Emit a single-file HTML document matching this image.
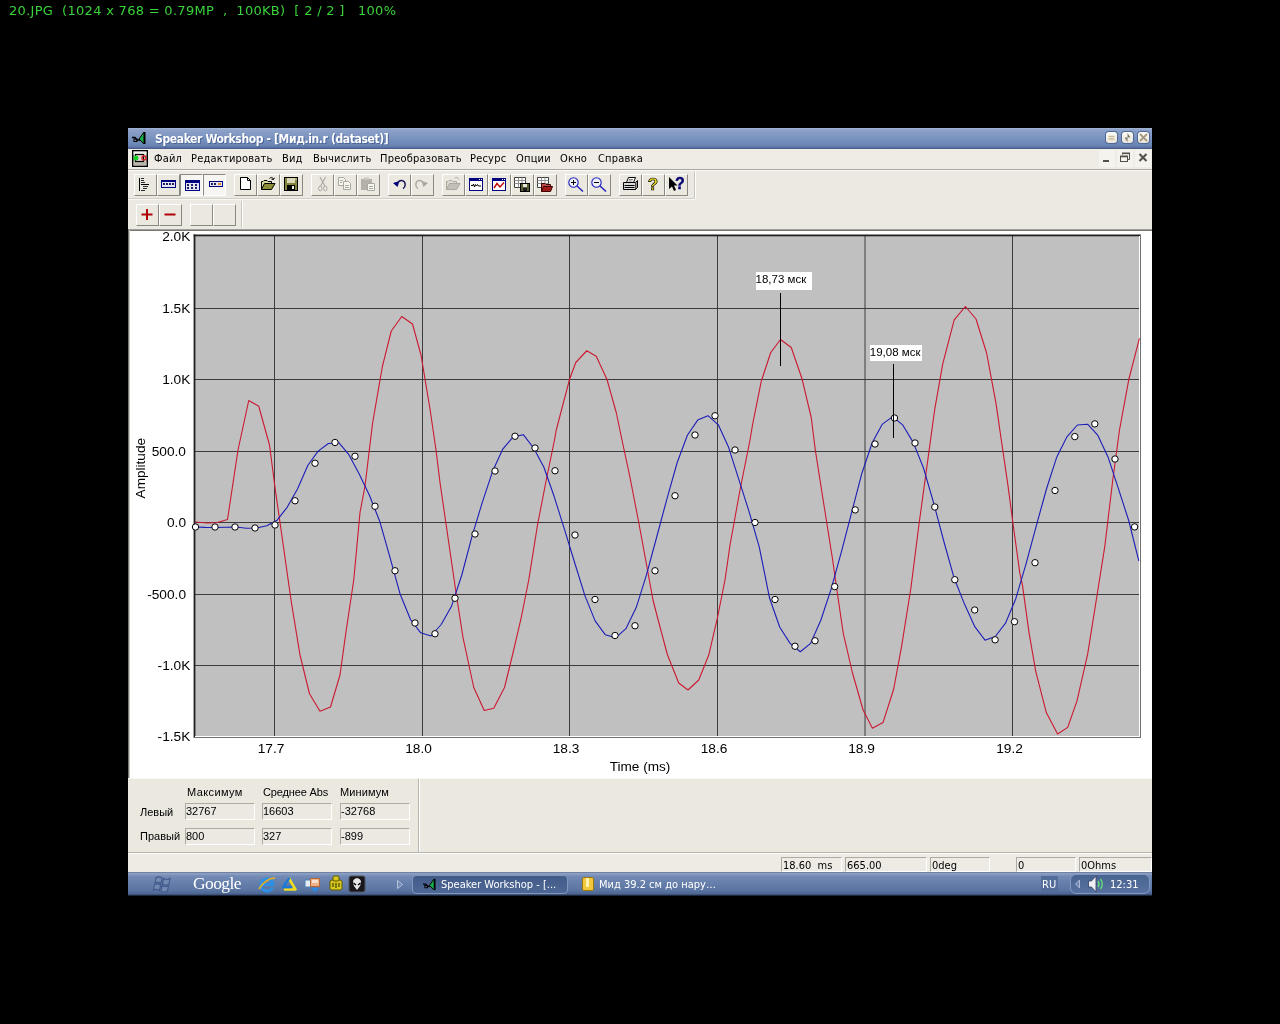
<!DOCTYPE html>
<html lang="ru">
<head>
<meta charset="utf-8">
<title>20.JPG</title>
<style>
html,body{margin:0;padding:0;background:#000;}
body{width:1280px;height:1024px;position:relative;overflow:hidden;font-family:"Liberation Sans",sans-serif;}
.abs{position:absolute;}
#info{will-change:transform;position:absolute;left:9px;top:3px;color:#3ad23a;font-family:"DejaVu Sans","Liberation Sans",sans-serif;font-size:13px;line-height:16px;white-space:pre;letter-spacing:0.3px;word-spacing:0;}
#win{position:absolute;left:128px;top:128px;width:1024px;height:768px;background:#ece9e2;overflow:hidden;will-change:transform;}
#title{position:absolute;left:0;top:0;width:1024px;height:21px;background:linear-gradient(#a5b6d6 0,#8ca1c9 2px,#7c95c0 9px,#6b86b5 17px,#6079aa 19px,#4f6596 20px,#475b8c 21px);}
#title .txt{position:absolute;left:27px;top:3px;color:#fff;font-weight:bold;font-size:12px;line-height:16px;font-family:"DejaVu Sans Condensed","DejaVu Sans","Liberation Sans",sans-serif;letter-spacing:-0.37px;white-space:pre;text-shadow:1px 1px 0 #4a6496;}
.cb{position:absolute;top:4px;width:11px;height:11px;border-radius:3px;background:linear-gradient(#fbfaf6,#e9e5d8);box-shadow:0 0 0 1px #4f6796;}
#menu{position:absolute;left:0;top:21px;width:1024px;height:20px;background:#efece5;}
#menu span{position:absolute;top:2px;font-size:11px;line-height:16px;color:#000;letter-spacing:0.2px;font-family:"DejaVu Sans Condensed","DejaVu Sans","Liberation Sans",sans-serif;white-space:pre;}
.mb{position:absolute;top:1px;width:16px;height:17px;background:#f5f3ee;}
.hl{position:absolute;left:0;width:1024px;height:1px;}
.btn{position:absolute;background:#ebe8e0;border-top:1px solid #fff;border-left:1px solid #fff;border-right:1px solid #8a887f;border-bottom:1px solid #8a887f;}
.btn.dn{background:#f6f5f1;border-top:1px solid #8a887f;border-left:1px solid #8a887f;border-right:1px solid #fff;border-bottom:1px solid #fff;}
.btn svg{position:absolute;left:2px;top:2px;overflow:visible;}
.btn.dn svg{left:3px;top:3px;}
#chart{position:absolute;left:0;top:101px;width:1024px;height:549px;background:#fff;}
#chart svg{position:absolute;left:0;top:0;}
#chart text{font-family:"Liberation Sans",sans-serif;fill:#000;}
.ax{font-size:13.7px;}
.ax2{font-size:13.6px;}
#panel{position:absolute;left:0;top:650px;width:1024px;height:76px;background:#ebe8e0;}
.fld{position:absolute;width:70px;height:17px;border:1px solid #aeaba2;border-right-color:#fff;border-bottom-color:#fff;box-sizing:border-box;font-size:11px;line-height:15px;padding-left:0;color:#000;background:#ece9e2;}
.lbl{position:absolute;font-size:11px;line-height:13px;color:#000;white-space:pre;}
#status{position:absolute;left:0;top:726px;width:1024px;height:18px;background:#eeebe4;}
.sf{position:absolute;top:3px;height:15px;border:1px solid #acaaa1;border-right-color:#fff;border-bottom-color:#fff;box-sizing:border-box;font-size:11px;line-height:15px;padding-left:1px;color:#000;font-family:"DejaVu Sans Condensed","DejaVu Sans","Liberation Sans",sans-serif;white-space:pre;}
#task{position:absolute;left:0;top:744px;width:1024px;height:24px;background:linear-gradient(#566480 0,#8c9ec2 1px,#8c9ec2 2px,#738bb5 4px,#667fab 11px,#5b75a2 18px,#4c6591 22px,#2f3f62 23px,#0a0e18 24px);}
#task .t{position:absolute;top:6px;color:#fff;font-size:11px;line-height:14px;font-family:"DejaVu Sans Condensed","DejaVu Sans","Liberation Sans",sans-serif;white-space:pre;}
#task svg{position:absolute;overflow:visible;}
</style>
</head>
<body>
<div id="info">20.JPG  (1024 x 768 = 0.79MP  ,  100KB)  [ 2 / 2 ]   100%</div>
<div id="win">
  <div id="title">
    <svg class="abs" style="left:3px;top:3px" width="16" height="14" viewBox="0 0 16 14"><path d="M8 8L13 1V13Z" fill="#18b048" stroke="#000" stroke-width="1"/><rect x="13" y="1" width="1.5" height="12" fill="#000"/><path d="M1 6.5H4L6 9H9" stroke="#000" stroke-width="1.3" fill="none"/><rect x="3" y="8" width="3" height="2.5" fill="none" stroke="#000"/></svg>
    <div class="txt">Speaker Workshop - [Мид.in.r (dataset)]</div>
    <div class="cb" style="left:978px"><svg class="abs" style="left:-1px;top:-1px" width="13" height="13"><path d="M3.5 5.5H9.5M3.5 8H9.5" stroke="#c8bc98" stroke-width="1.6"/></svg></div>
    <div class="cb" style="left:994px"><svg class="abs" style="left:-1px;top:-1px" width="13" height="13"><path d="M6.5 2L9.5 6.5H6.5ZM6.5 11L3.5 6.5H6.5Z" fill="#7c7868"/></svg></div>
    <div class="cb" style="left:1010px"><svg class="abs" style="left:-1px;top:-1px" width="13" height="13"><path d="M3 3L10 10M10 3L3 10" stroke="#a09880" stroke-width="1.8"/></svg></div>
  </div>
  <div id="menu">
    <svg class="abs" style="left:4px;top:1px" width="16" height="17" viewBox="0 0 16 17"><rect x="0" y="0" width="16" height="17" fill="#000"/><rect x="1.500" y="1.500" width="13" height="14" fill="#d0cdc4"/><rect x="1.500" y="1.500" width="13" height="3" fill="#f0eee8"/><rect x="1.500" y="12" width="13" height="3.500" fill="#b8b5ac"/><rect x="3.500" y="4.500" width="8" height="7" fill="#e8d0d0" stroke="#000" stroke-width="1.2"/><circle cx="4" cy="8" r="2.500" fill="#18d028"/><circle cx="12" cy="8" r="2" fill="none" stroke="#d02020" stroke-width="1.300"/></svg>
    <span style="left:26px">Файл</span>
    <span style="left:63px">Редактировать</span>
    <span style="left:154px">Вид</span>
    <span style="left:185px">Вычислить</span>
    <span style="left:252px">Преобразовать</span>
    <span style="left:342px">Ресурс</span>
    <span style="left:388px">Опции</span>
    <span style="left:432px">Окно</span>
    <span style="left:470px">Справка</span>
    <div class="mb" style="left:971px"><svg width="16" height="15"><rect x="4" y="10" width="6" height="2" fill="#555047"/></svg></div>
    <div class="mb" style="left:989px"><svg width="16" height="15"><path d="M5.5 4.5V3.5H12.5V9.5H10.5" fill="none" stroke="#555047"/><rect x="5" y="2.5" width="8" height="1.6" fill="#555047"/><rect x="3.5" y="6.5" width="7" height="5" fill="none" stroke="#555047"/><rect x="3" y="5.5" width="8" height="1.8" fill="#555047"/></svg></div>
    <div class="mb" style="left:1007px"><svg width="16" height="15"><path d="M4.5 4L11.5 11M11.5 4L4.5 11" stroke="#555047" stroke-width="2"/></svg></div>
  </div>
  <div class="hl" style="top:41px;background:#aaa79e"></div>
  <div class="hl" style="top:42px;background:#fbfaf7"></div>
  <div id="tb1">
    <div class="abs" style="left:566px;top:43px;width:1px;height:28px;background:#c9c6bc"></div>
    <div class="abs" style="left:567px;top:43px;width:1px;height:28px;background:#fff"></div>
    <div class="abs" style="left:0;top:70px;width:567px;height:1px;background:#d2cfc6"></div>
    <div class="abs" style="left:0;top:71px;width:567px;height:1px;background:#f8f7f3"></div>
    <div class="btn" style="left:6px;top:46px;width:21px;height:20px"><svg viewBox="0 0 16 15" width="16" height="15"><rect x="2" y="1" width="1" height="13" fill="#000"/><rect x="4" y="1" width="3" height="1" fill="#303030"/><rect x="4" y="3" width="3" height="1" fill="#303030"/><rect x="4" y="5" width="4" height="1" fill="#303030"/><rect x="4" y="7" width="8" height="1" fill="#000"/><rect x="6" y="9" width="5" height="1" fill="#303030"/><rect x="6" y="11" width="4" height="1" fill="#303030"/><rect x="4" y="13" width="4" height="1" fill="#303030"/></svg></div>
    <div class="btn" style="left:29px;top:46px;width:21px;height:20px"><svg viewBox="0 0 16 15" width="16" height="15"><rect x="1" y="3" width="15" height="8" fill="#000080"/><rect x="2" y="5" width="13" height="5" fill="#e4e4f4"/><rect x="3" y="6" width="2" height="2" fill="#202060"/><rect x="6" y="6" width="2" height="2" fill="#202060"/><rect x="9" y="6" width="2" height="2" fill="#202060"/><rect x="12" y="6" width="2" height="2" fill="#202060"/></svg></div>
    <div class="btn dn" style="left:52px;top:46px;width:21px;height:20px"><svg viewBox="0 0 16 15" width="16" height="15"><rect x="1" y="2" width="15" height="11" fill="#000080"/><rect x="2" y="5" width="13" height="7" fill="#e4e4f4"/><rect x="3" y="6" width="2" height="2" fill="#202060"/><rect x="3" y="9" width="2" height="2" fill="#202060"/><rect x="7" y="6" width="2" height="2" fill="#202060"/><rect x="7" y="9" width="2" height="2" fill="#202060"/><rect x="11" y="6" width="2" height="2" fill="#202060"/><rect x="11" y="9" width="2" height="2" fill="#202060"/></svg></div>
    <div class="btn dn" style="left:75px;top:46px;width:21px;height:20px"><svg viewBox="0 0 16 15" width="16" height="15"><rect x="2" y="3" width="14" height="6" fill="#000080"/><rect x="3" y="4" width="12" height="4" fill="#e4e4f4"/><rect x="4" y="5" width="2" height="2" fill="#202060"/><rect x="7" y="5" width="2" height="2" fill="#202060"/><rect x="11" y="5" width="3" height="2" fill="#e09020"/></svg></div>
    <div class="btn" style="left:106px;top:46px;width:21px;height:20px"><svg viewBox="0 0 16 15" width="16" height="15"><path d="M3.5 0.5H10.5L13.5 3.5V12.5H3.5Z" stroke="#000" stroke-width="1" fill="#fff"/><path d="M10.5 0.5V3.5H13.5" stroke="#000" stroke-width="1" fill="none"/></svg></div>
    <div class="btn" style="left:129px;top:46px;width:21px;height:20px"><svg viewBox="0 0 16 15" width="16" height="15"><path d="M1.5 12.5V4.5H3L4 3.5H7L8 4.5H11.5V6.5" stroke="#000" stroke-width="1" fill="#d8d898"/><path d="M1.5 12.5L4.5 6.5H15L11.5 12.5Z" stroke="#000" stroke-width="1" fill="#8e8e3a"/><path d="M9.5 1.5C11 0 13 0 13.5 2.5M13.5 2.5L11.5 2.2M13.5 2.5L14.5 0.8" stroke="#000" stroke-width="1" fill="none"/></svg></div>
    <div class="btn" style="left:152px;top:46px;width:21px;height:20px"><svg viewBox="0 0 16 15" width="16" height="15"><rect x="1" y="0" width="14" height="14" fill="#000"/><rect x="2" y="1" width="12" height="12" fill="#84843c"/><rect x="4" y="1" width="8" height="5" fill="#d8d8b8"/><rect x="4" y="8" width="8" height="5" fill="#000"/><rect x="9" y="9" width="2" height="3" fill="#f0f0e0"/><rect x="12.5" y="1.5" width="1" height="1.5" fill="#f0f0e0"/></svg></div>
    <div class="btn" style="left:183px;top:46px;width:21px;height:20px"><svg viewBox="0 0 16 15" width="16" height="15"><path d="M6 0L10.8 9M11.5 0L6.7 9" stroke="#aaa89e" stroke-width="1.1" fill="none"/><ellipse cx="6.3" cy="11.5" rx="1.7" ry="2.4" stroke="#aaa89e" fill="none"/><ellipse cx="11.3" cy="11.500" rx="1.7" ry="2.4" stroke="#aaa89e" fill="none"/></svg></div>
    <div class="btn" style="left:206px;top:46px;width:21px;height:20px"><svg viewBox="0 0 16 15" width="16" height="15"><path d="M1.5 0.5H6.5L8.5 2.5V8.5H1.5Z" stroke="#aaa89e" stroke-width="1" fill="#f6f5f0"/><path d="M6.5 4.5H11.5L13.5 6.5V12.5H6.5Z" stroke="#aaa89e" stroke-width="1" fill="#f6f5f0"/><path d="M8 8.5H12M8 10.500H12M3 3.5H6M3 5.5H5" stroke="#aaa89e" stroke-width="1" fill="none"/></svg></div>
    <div class="btn" style="left:229px;top:46px;width:21px;height:20px"><svg viewBox="0 0 16 15" width="16" height="15"><rect x="1" y="2" width="11" height="11" fill="#b4b2a8"/><rect x="4" y="0.5" width="5" height="2.5" fill="#c8c6bd"/><path d="M7.5 6.5H14.5V13.500H7.5Z" stroke="#aaa89e" stroke-width="1" fill="#f6f5f0"/><path d="M9 9.5H13M9 11.500H13" stroke="#aaa89e" stroke-width="1" fill="none"/></svg></div>
    <div class="btn" style="left:260px;top:46px;width:21px;height:20px"><svg viewBox="0 0 16 15" width="16" height="15"><path d="M7 5.5C9 2.2 14 3 14.2 7.5C14.2 9.500 13.5 10.800 12 11.500" stroke="#101050" stroke-width="1.4" fill="none"/><path d="M2 6L8.500 4L6.500 10Z" fill="#000078"/></svg></div>
    <div class="btn" style="left:283px;top:46px;width:21px;height:20px"><svg viewBox="0 0 16 15" width="16" height="15"><path d="M9 5.5C7 2.2 2 3 1.8 7.5C1.8 9.500 2.5 10.800 4 11.500" stroke="#aaa89e" stroke-width="1.4" fill="none"/><path d="M14 6L7.500 4L9.500 10Z" fill="#aaa89e"/></svg></div>
    <div class="btn" style="left:314px;top:46px;width:21px;height:20px"><svg viewBox="0 0 16 15" width="16" height="15"><path d="M1.5 12.500V4.5H3L4 3.5H7L8 4.5H11.5V6.5" stroke="#aaa89e" stroke-width="1" fill="#dcdad2"/><path d="M1.5 12.500L4.5 6.5H15L11.500 12.500Z" stroke="#aaa89e" stroke-width="1" fill="#c2c0b6"/><path d="M9.5 1.5C11 0 13 0 13.5 2.5" stroke="#aaa89e" stroke-width="1" fill="none"/></svg></div>
    <div class="btn" style="left:337px;top:46px;width:21px;height:20px"><svg viewBox="0 0 16 15" width="16" height="15"><rect x="1" y="1" width="14" height="13" fill="#000080"/><rect x="2" y="4" width="12" height="9" fill="#fff"/><rect x="11" y="2" width="1" height="1" fill="#fff"/><rect x="13" y="2" width="1" height="1" fill="#fff"/><path d="M3 8.5H5L5.5 7L6.5 10L7.5 7.5L8.5 9L9.500 7.5L10.500 9H13" stroke="#000" stroke-width="1" fill="none"/></svg></div>
    <div class="btn" style="left:360px;top:46px;width:21px;height:20px"><svg viewBox="0 0 16 15" width="16" height="15"><rect x="1" y="1" width="14" height="13" fill="#000080"/><rect x="2" y="4" width="12" height="9" fill="#fff"/><rect x="11" y="2" width="1" height="1" fill="#fff"/><rect x="13" y="2" width="1" height="1" fill="#fff"/><path d="M3 11L6 6.5L9 10L13 5.5" stroke="#c00000" stroke-width="1.4" fill="none"/></svg></div>
    <div class="btn" style="left:383px;top:46px;width:21px;height:20px"><svg viewBox="0 0 16 15" width="16" height="15"><path d="M0.5 0.5H11.5V10.500H0.5Z" stroke="#404040" stroke-width="1" fill="#fff"/><path d="M0.5 3.5H11.5M0.5 6.5H11.5M4.5 0.5V10.500M8 0.5V10.500" stroke="#909090" stroke-width="1" fill="none"/><rect x="6" y="6" width="10" height="9" fill="#000"/><rect x="7" y="7" width="8" height="7" fill="#5c5c38"/><rect x="9" y="7" width="4" height="3" fill="#e8e8d8"/><rect x="9" y="11" width="4" height="3" fill="#202020"/></svg></div>
    <div class="btn" style="left:406px;top:46px;width:21px;height:20px"><svg viewBox="0 0 16 15" width="16" height="15"><path d="M0.5 0.5H11.5V10.500H0.5Z" stroke="#404040" stroke-width="1" fill="#fff"/><path d="M0.5 3.5H11.5M0.5 6.5H11.5M4.5 0.5V10.500M8 0.5V10.500" stroke="#909090" stroke-width="1" fill="none"/><path d="M4.5 14.500V6.5H8L9 7.5H13.500V9.500" stroke="#400000" stroke-width="1" fill="#c05050"/><path d="M4.5 14.500L6.5 9.500H15.500L13.500 14.500Z" stroke="#400000" stroke-width="1" fill="#a01818"/></svg></div>
    <div class="btn" style="left:437px;top:46px;width:21px;height:20px"><svg viewBox="0 0 16 15" width="16" height="15"><circle cx="5.5" cy="5.5" r="4.7" stroke="#2020c0" stroke-width="1.1" fill="#f0f0fa"/><path d="M9 9L15 14.500" stroke="#2020c0" stroke-width="1.5" fill="none"/><path d="M3 5.5H8M5.5 3V8" stroke="#000" stroke-width="1" fill="none"/></svg></div>
    <div class="btn" style="left:460px;top:46px;width:21px;height:20px"><svg viewBox="0 0 16 15" width="16" height="15"><circle cx="5.5" cy="5.5" r="4.7" stroke="#2020c0" stroke-width="1.1" fill="#f0f0fa"/><path d="M9 9L15 14.500" stroke="#2020c0" stroke-width="1.5" fill="none"/><path d="M3 5.5H8" stroke="#000" stroke-width="1" fill="none"/></svg></div>
    <div class="btn" style="left:491px;top:46px;width:21px;height:20px"><svg viewBox="0 0 16 15" width="16" height="15"><path d="M4.5 5.5L6.5 0.5H13.500L11.500 5.5" stroke="#000" stroke-width="1" fill="#fff"/><path d="M1.5 5.5H13.500V12.500H1.5Z" stroke="#000" stroke-width="1" fill="#d8d8d8"/><path d="M13.500 5.5L15.500 3.5V10.500L13.500 12.500" stroke="#000" stroke-width="1" fill="#909090"/><path d="M2.5 8.5H12.500M2.5 10.500H12.500" stroke="#000" stroke-width="1" fill="none"/><path d="M7 2.5H11M6.5 4H10.500" stroke="#606060" stroke-width="0.8" fill="none"/></svg></div>
    <div class="btn" style="left:514px;top:46px;width:21px;height:20px"><svg viewBox="0 0 16 15" width="16" height="15"><text x="8" y="12.5" text-anchor="middle" font-family="Liberation Sans,sans-serif" font-weight="bold" font-size="17" fill="#f4e428" stroke="#000" stroke-width="0.7">?</text></svg></div>
    <div class="btn" style="left:537px;top:46px;width:21px;height:20px"><svg viewBox="0 0 16 15" width="16" height="15"><path d="M1 0V12L4 9.500L6 14L8 13L6 8.5H9.500Z" fill="#000"/><text x="11.800" y="11.500" text-anchor="middle" font-family="Liberation Sans,sans-serif" font-weight="bold" font-size="16" fill="#000070" stroke="#000070" stroke-width="0.4">?</text></svg></div>
  </div>
  <div id="tb2">
    <div class="abs" style="left:113px;top:73px;width:1px;height:27px;background:#c9c6bc"></div>
    <div class="abs" style="left:114px;top:73px;width:1px;height:27px;background:#fff"></div>
    <div class="btn" style="left:8px;top:76px;width:21px;height:20px"><svg viewBox="0 0 16 15" width="16" height="15"><path d="M2.5 7.5H13.5M8 2V13" stroke="#b00008" stroke-width="2" fill="none"/></svg></div>
    <div class="btn" style="left:31px;top:76px;width:21px;height:20px"><svg viewBox="0 0 16 15" width="16" height="15"><path d="M2.5 7.5H13.5" stroke="#b00008" stroke-width="2" fill="none"/></svg></div>
    <div class="btn" style="left:62px;top:76px;width:21px;height:20px"></div>
    <div class="btn" style="left:85px;top:76px;width:21px;height:20px"></div>
  </div>
  <div id="chart">
    <div class="abs" style="left:0;top:0;width:1024px;height:1px;background:#a09e96"></div>
    <div class="abs" style="left:0;top:1px;width:1024px;height:1px;background:#787670"></div>
    <div class="abs" style="left:0;top:0;width:1px;height:549px;background:#7a7872"></div>
    <div class="abs" style="left:1px;top:1px;width:1px;height:548px;background:#c8c6c0"></div>
    <svg width="1024" height="549" viewBox="128 229 1024 549">
      <rect x="194" y="235" width="947" height="503" fill="#c0c0c0"/>
      <rect x="274" y="236" width="1" height="500" fill="#3c3c3c"/>
      <rect x="422" y="236" width="1" height="500" fill="#3c3c3c"/>
      <rect x="569" y="236" width="1" height="500" fill="#3c3c3c"/>
      <rect x="717" y="236" width="1" height="500" fill="#3c3c3c"/>
      <rect x="864.5" y="236" width="1" height="500" fill="#3c3c3c"/>
      <rect x="1012" y="236" width="1" height="500" fill="#3c3c3c"/>
      <rect x="195" y="308" width="944" height="1" fill="#3c3c3c"/>
      <rect x="195" y="379" width="944" height="1" fill="#3c3c3c"/>
      <rect x="195" y="451" width="944" height="1" fill="#3c3c3c"/>
      <rect x="195" y="522" width="944" height="1" fill="#3c3c3c"/>
      <rect x="195" y="594" width="944" height="1" fill="#3c3c3c"/>
      <rect x="195" y="665" width="944" height="1" fill="#3c3c3c"/>
      <rect x="193.6" y="234.5" width="947" height="1.8" fill="#202020"/><rect x="193.6" y="234.5" width="1.8" height="503" fill="#202020"/>
      <rect x="1139" y="236" width="1" height="501" fill="#fff"/><rect x="195" y="736" width="945" height="1" fill="#fff"/><rect x="1140" y="234.5" width="1" height="503.5" fill="#707070"/><rect x="193.6" y="737" width="947.4" height="1" fill="#707070"/>
      <polyline points="195,522 207.5,523 217.5,522.5 227.5,519.5 238,450 248.75,400.5 258.75,406.25 269.5,445 275,487.5 282.5,540 291,600 300,655 309.5,693.75 320,711.25 330.5,707 340,675 346.25,630 353.75,580 360,512.5 365,486 372.5,423.75 380,380 382.5,366 391.25,331 401.75,316.5 412.5,324 421,355 430,409 436,450 440,482.5 456,592.5 463,637.5 473.75,687.5 484.25,710.5 493.75,708.25 504.5,687.5 512.5,655 521.25,617.5 528.75,580 537.5,525 546.25,480 554.5,440 556.25,430 569.5,379.5 575.75,362.5 586.75,350.75 596.25,356.25 607,379.5 616.25,412.5 622,440 630,477.5 638.75,522.5 647.5,570 653,600 657.5,617.5 667.5,655 678.75,683 688,690 698.75,680 708.75,655 717.5,617.5 725,580 730,545 740,490 750,440 752.5,425 761.25,381.25 770.75,352.5 780.5,339.5 791.25,347.5 802,378.75 811.25,417.5 815.3,450 823.3,501 832.6,559.5 836.6,588 843.2,633 852.5,673 863.1,710 872.4,728.2 883,722.6 893.7,689 901.6,646.4 910.9,588 918.9,525 926.9,466.6 934.8,408.8 942.8,363.6 954.2,319.8 965.4,306.5 976,319 986.6,353 996,403.4 1001.3,440 1007.9,485.2 1013.2,525 1019.8,572.8 1022.5,585.3 1029.1,633.1 1035.8,671.6 1046.4,712.8 1057.6,734 1067.7,727.4 1077,700.9 1087.6,654.4 1098.2,588 1104.8,546.3 1112.8,479.8 1119.5,430 1128.8,379.5 1139.4,338.4" fill="none" stroke="#cc1830" stroke-width="1.1" stroke-linejoin="round"/>
      <polyline points="195,527 205.3,527.4 215.5,527.5 225.8,527.3 236,527 246.3,528.2 256.6,528 266.8,525.8 277.1,520.2 287.3,507.1 297.6,488.7 307.9,465.3 318.1,451.1 328.4,443.5 338.6,442.4 348.9,454.7 359.2,474.1 369.4,495.3 379.7,521.2 389.9,557.2 400.2,594.3 410.5,619.5 420.7,632.8 431,636 441.2,624.5 451.5,606.3 461.8,575 472,536.3 482.3,502.3 492.5,471.6 502.8,449.1 513.1,436.9 523.3,434.7 533.6,448 543.8,467 554.1,496.3 564.4,529.2 574.6,562.5 584.9,595.6 595.1,620.9 605.4,634.8 615.7,637.8 625.9,628.7 636.2,607.6 646.4,575.2 656.7,537 667,498.6 677.2,462.5 687.5,435 697.7,420.1 708,415.7 718.3,424.8 728.5,447.1 738.8,479.3 749,511.4 759.3,547.1 769.6,598.3 779.8,627.3 790.1,643.4 800.3,651.7 810.6,643.4 820.9,620 831.1,589.2 841.4,551.8 851.6,512.7 861.9,473.2 872.2,442.8 882.4,424.1 892.7,416.6 902.9,425.2 913.2,442.4 923.5,468 933.7,503.2 944,542 954.2,578.3 964.5,604.1 974.8,626.7 985,640.2 995.3,636.5 1005.5,623.2 1015.8,598.7 1026.1,563.6 1036.3,525.8 1046.6,488.5 1056.8,456.9 1067.1,436.6 1077.4,425 1087.6,424.2 1097.9,435.4 1108.1,457.2 1118.4,488.7 1128.7,520.5 1138.8,560.9" fill="none" stroke="#1c1cb8" stroke-width="1.1" stroke-linejoin="round"/>
      <circle cx="195.5" cy="527" r="3.2" fill="#fff" stroke="#000" stroke-width="1"/>
      <circle cx="215" cy="527" r="3.2" fill="#fff" stroke="#000" stroke-width="1"/>
      <circle cx="235" cy="527" r="3.2" fill="#fff" stroke="#000" stroke-width="1"/>
      <circle cx="255" cy="528" r="3.2" fill="#fff" stroke="#000" stroke-width="1"/>
      <circle cx="275" cy="525" r="3.2" fill="#fff" stroke="#000" stroke-width="1"/>
      <circle cx="295" cy="500.75" r="3.2" fill="#fff" stroke="#000" stroke-width="1"/>
      <circle cx="315" cy="463.25" r="3.2" fill="#fff" stroke="#000" stroke-width="1"/>
      <circle cx="335" cy="442.5" r="3.2" fill="#fff" stroke="#000" stroke-width="1"/>
      <circle cx="355" cy="456.25" r="3.2" fill="#fff" stroke="#000" stroke-width="1"/>
      <circle cx="375" cy="506.25" r="3.2" fill="#fff" stroke="#000" stroke-width="1"/>
      <circle cx="395" cy="570.75" r="3.2" fill="#fff" stroke="#000" stroke-width="1"/>
      <circle cx="415" cy="623" r="3.2" fill="#fff" stroke="#000" stroke-width="1"/>
      <circle cx="435" cy="633.75" r="3.2" fill="#fff" stroke="#000" stroke-width="1"/>
      <circle cx="455" cy="598.25" r="3.2" fill="#fff" stroke="#000" stroke-width="1"/>
      <circle cx="475" cy="534" r="3.2" fill="#fff" stroke="#000" stroke-width="1"/>
      <circle cx="495" cy="471" r="3.2" fill="#fff" stroke="#000" stroke-width="1"/>
      <circle cx="515" cy="436.25" r="3.2" fill="#fff" stroke="#000" stroke-width="1"/>
      <circle cx="535" cy="448" r="3.2" fill="#fff" stroke="#000" stroke-width="1"/>
      <circle cx="555" cy="470.75" r="3.2" fill="#fff" stroke="#000" stroke-width="1"/>
      <circle cx="575" cy="535" r="3.2" fill="#fff" stroke="#000" stroke-width="1"/>
      <circle cx="595" cy="599.5" r="3.2" fill="#fff" stroke="#000" stroke-width="1"/>
      <circle cx="615" cy="635.5" r="3.2" fill="#fff" stroke="#000" stroke-width="1"/>
      <circle cx="635" cy="625.75" r="3.2" fill="#fff" stroke="#000" stroke-width="1"/>
      <circle cx="655" cy="570.75" r="3.2" fill="#fff" stroke="#000" stroke-width="1"/>
      <circle cx="675" cy="495.75" r="3.2" fill="#fff" stroke="#000" stroke-width="1"/>
      <circle cx="695" cy="435" r="3.2" fill="#fff" stroke="#000" stroke-width="1"/>
      <circle cx="715" cy="415.75" r="3.2" fill="#fff" stroke="#000" stroke-width="1"/>
      <circle cx="735" cy="450" r="3.2" fill="#fff" stroke="#000" stroke-width="1"/>
      <circle cx="755" cy="522.5" r="3.2" fill="#fff" stroke="#000" stroke-width="1"/>
      <circle cx="775" cy="599.5" r="3.2" fill="#fff" stroke="#000" stroke-width="1"/>
      <circle cx="795" cy="646.25" r="3.2" fill="#fff" stroke="#000" stroke-width="1"/>
      <circle cx="815" cy="640.75" r="3.2" fill="#fff" stroke="#000" stroke-width="1"/>
      <circle cx="834.7" cy="586.6" r="3.2" fill="#fff" stroke="#000" stroke-width="1"/>
      <circle cx="855.2" cy="509.9" r="3.2" fill="#fff" stroke="#000" stroke-width="1"/>
      <circle cx="875" cy="444" r="3.2" fill="#fff" stroke="#000" stroke-width="1"/>
      <circle cx="894.5" cy="418" r="3.2" fill="#fff" stroke="#000" stroke-width="1"/>
      <circle cx="915" cy="443" r="3.2" fill="#fff" stroke="#000" stroke-width="1"/>
      <circle cx="934.8" cy="507" r="3.2" fill="#fff" stroke="#000" stroke-width="1"/>
      <circle cx="954.8" cy="579.7" r="3.2" fill="#fff" stroke="#000" stroke-width="1"/>
      <circle cx="974.7" cy="610" r="3.2" fill="#fff" stroke="#000" stroke-width="1"/>
      <circle cx="995.1" cy="639.8" r="3.2" fill="#fff" stroke="#000" stroke-width="1"/>
      <circle cx="1014.5" cy="621.7" r="3.2" fill="#fff" stroke="#000" stroke-width="1"/>
      <circle cx="1035" cy="562.7" r="3.2" fill="#fff" stroke="#000" stroke-width="1"/>
      <circle cx="1055" cy="490.5" r="3.2" fill="#fff" stroke="#000" stroke-width="1"/>
      <circle cx="1074.8" cy="436.6" r="3.2" fill="#fff" stroke="#000" stroke-width="1"/>
      <circle cx="1094.8" cy="423.9" r="3.2" fill="#fff" stroke="#000" stroke-width="1"/>
      <circle cx="1115" cy="459" r="3.2" fill="#fff" stroke="#000" stroke-width="1"/>
      <circle cx="1134.6" cy="526.9" r="3.2" fill="#fff" stroke="#000" stroke-width="1"/>
      <rect x="780" y="293" width="1" height="73" fill="#000"/><rect x="893" y="364" width="1" height="74" fill="#000"/>
      <rect x="756" y="272" width="56" height="18" fill="#fff"/><rect x="870" y="345" width="52" height="16" fill="#fff"/>
      <text x="755.5" y="283.2" font-size="11.5" class="an">18,73 мск</text><text x="869.8" y="356" font-size="11.5" class="an">19,08 мск</text>
      <text x="190.3" y="241" text-anchor="end" class="ax">2.0K</text>
      <text x="190.3" y="312.7" text-anchor="end" class="ax">1.5K</text>
      <text x="190.3" y="383.7" text-anchor="end" class="ax">1.0K</text>
      <text x="186" y="455.7" text-anchor="end" class="ax">500.0</text>
      <text x="186" y="526.7" text-anchor="end" class="ax">0.0</text>
      <text x="186" y="598.7" text-anchor="end" class="ax">-500.0</text>
      <text x="190.3" y="669.7" text-anchor="end" class="ax">-1.0K</text>
      <text x="190.3" y="741.2" text-anchor="end" class="ax">-1.5K</text>
      <text x="271" y="753" text-anchor="middle" class="ax">17.7</text>
      <text x="418.5" y="753" text-anchor="middle" class="ax">18.0</text>
      <text x="566" y="753" text-anchor="middle" class="ax">18.3</text>
      <text x="714" y="753" text-anchor="middle" class="ax">18.6</text>
      <text x="861.5" y="753" text-anchor="middle" class="ax">18.9</text>
      <text x="1009.5" y="753" text-anchor="middle" class="ax">19.2</text>
      <text x="640" y="770.5" text-anchor="middle" class="ax2">Time (ms)</text>
      <text transform="translate(145.4,468.2) rotate(-90)" text-anchor="middle" class="ax2">Amplitude</text>
    </svg>
  </div>
  <div id="panel">
    <div class="lbl" style="left:59px;top:8px;letter-spacing:0.4px">Максимум</div>
    <div class="lbl" style="left:135px;top:8px;letter-spacing:-0.15px">Среднее Abs</div>
    <div class="lbl" style="left:212px;top:8px;letter-spacing:0.1px">Минимум</div>
    <div class="lbl" style="left:12px;top:28px">Левый</div>
    <div class="lbl" style="left:12px;top:52px">Правый</div>
    <div class="fld" style="left:57px;top:25px">32767</div>
    <div class="fld" style="left:134px;top:25px">16603</div>
    <div class="fld" style="left:212px;top:25px">-32768</div>
    <div class="fld" style="left:57px;top:50px">800</div>
    <div class="fld" style="left:134px;top:50px">327</div>
    <div class="fld" style="left:212px;top:50px">-899</div>
    <div class="abs" style="left:290px;top:0;width:1px;height:75px;background:#b8b5ac"></div><div class="abs" style="left:291px;top:0;width:1px;height:75px;background:#fff"></div>
    <div class="abs" style="left:0;top:74px;width:1024px;height:1px;background:#b8b5ac"></div><div class="abs" style="left:0;top:75px;width:1024px;height:1px;background:#fff"></div>
    <div class="abs" style="left:0;top:0;width:1024px;height:1px;background:#f7f6f2"></div>
  </div>
  <div id="status">
    <div class="sf" style="left:653px;width:61px">18.60  ms</div>
    <div class="sf" style="left:717px;width:82px">665.00</div>
    <div class="sf" style="left:802px;width:60px">0deg</div>
    <div class="sf" style="left:888px;width:60px">0</div>
    <div class="sf" style="left:951px;width:73px">0Ohms</div>
  </div>
  <div id="task">
    <svg style="left:24px;top:4px" width="20" height="17" viewBox="0 0 20 17"><g fill="#7289b2" stroke="#42588a" stroke-width="1.100"><path d="M4 1.500Q7 0 10 2L9 7.500Q6 5.500 3 7Z"/><path d="M11.500 2.500Q14.500 4.500 18 2.500L17 8Q13.500 10 10.500 8Z"/><path d="M2.500 8.500Q5.500 7 8.500 9L7.500 14.500Q4.500 12.500 1.500 14Z"/><path d="M10 9.500Q13 11.500 16.500 9.500L15.500 15Q12 17 9 15Z"/></g></svg>
    <div class="abs" style="left:65px;top:-1.5px;color:#fff;font-family:'Liberation Serif',serif;font-size:17.5px;line-height:24px;letter-spacing:-0.6px;white-space:pre">Google</div>
    <svg style="left:130px;top:3px" width="110" height="18" viewBox="0 0 110 18">
      <path d="M14.500 12.500A6 6 0 1 1 15 9.500H5" fill="none" stroke="#2c90e4" stroke-width="3"/><path d="M1 14Q8 3 17 3" stroke="#e8b020" stroke-width="1.6" fill="none"/>
      <path d="M31 3.500L37.500 14.500H27" fill="none" stroke="#f0dc20" stroke-width="2.600" stroke-linejoin="round" stroke-linecap="round"/><path d="M31 3.500L25 12H33" fill="none" stroke="#1c78d8" stroke-width="2.300" stroke-linejoin="round" stroke-linecap="round"/>
      <rect x="47" y="5" width="7" height="7" fill="#e4ecf4" stroke="#5080b0"/><rect x="52.500" y="3.500" width="9" height="8" fill="#f0b088" stroke="#b06838"/><rect x="54" y="5" width="6" height="3" fill="#f8e0d0"/><path d="M53 13H61L57 17.500Z" fill="#2c88e0"/>
      <rect x="72" y="5" width="12" height="10" rx="2" fill="#d8c820" stroke="#605800"/><rect x="75" y="1" width="6" height="5" rx="1" fill="#d8c820" stroke="#605800"/><path d="M75 8V12M78 8V13M81 8V12" stroke="#404000" stroke-width="1.2"/>
      <rect x="91" y="1" width="16" height="16" rx="2" fill="#18181c" stroke="#50545c"/><path d="M99 3Q105 4 102 11L99 15L96 11Q93 4 99 3Z" fill="#e8e8e8"/><path d="M95.5 8L98 10M102.500 8L100 10" stroke="#000" stroke-width="1.4"/>
    </svg>
    <svg style="left:268px;top:7px" width="8" height="11"><path d="M1.5 1.5L6.5 5.500L1.5 9.500Z" fill="#6f88b4" stroke="#b8c4dc" stroke-width="1"/></svg>
    <div class="abs" style="left:284px;top:3px;width:156px;height:19px;border-radius:4px;background:linear-gradient(#425a88,#4e6896);border:1px solid #8097be;box-sizing:border-box;"></div>
    <svg style="left:294px;top:6px" width="15" height="13" viewBox="0 0 16 14"><path d="M8 8L13 1V13Z" fill="#18b048" stroke="#000" stroke-width="1"/><rect x="13" y="1" width="1.5" height="12" fill="#000"/><path d="M1 6.500H4L6 9H9" stroke="#000" stroke-width="1.3" fill="none"/><rect x="3" y="8" width="3" height="2.5" fill="none" stroke="#000"/></svg>
    <div class="t" style="left:313px">Speaker Workshop - [...</div>
    <svg style="left:454px;top:5px" width="12" height="14"><rect x="0.5" y="0.5" width="11" height="13" rx="1.5" fill="#f0c838" stroke="#a07810"/><rect x="4" y="1" width="3" height="9" fill="#fff2b0"/></svg>
    <div class="t" style="left:471px">Мид 39.2 см до нару…</div>
    <div class="abs" style="left:913px;top:4px;width:17px;height:16px;background:#546c9a"></div>
    <div class="t" style="left:914px">RU</div>
    <div class="abs" style="left:942px;top:2px;width:80px;height:20px;border-radius:6px;background:linear-gradient(#4a6492,#58729f);border:1px solid #8298c0;box-sizing:border-box;"></div>
    <svg style="left:945px;top:5px" width="32" height="14" viewBox="0 0 32 14"><path d="M6.500 3L2.500 7L6.500 11Z" fill="#7088b4" stroke="#b4c2dc" stroke-width="0.900"/><path d="M15.500 4H18.500L23 -1V15L18.500 10H15.500Z" fill="#f0f0f4" stroke="#38486c" stroke-width="0.900"/><path d="M25 4Q27 7 25 10M27.500 2Q31 7 27.500 12" stroke="#60dc78" stroke-width="1.400" fill="none"/></svg>
    <div class="t" style="left:982px">12:31</div>
  </div>
</div>
</body>
</html>
